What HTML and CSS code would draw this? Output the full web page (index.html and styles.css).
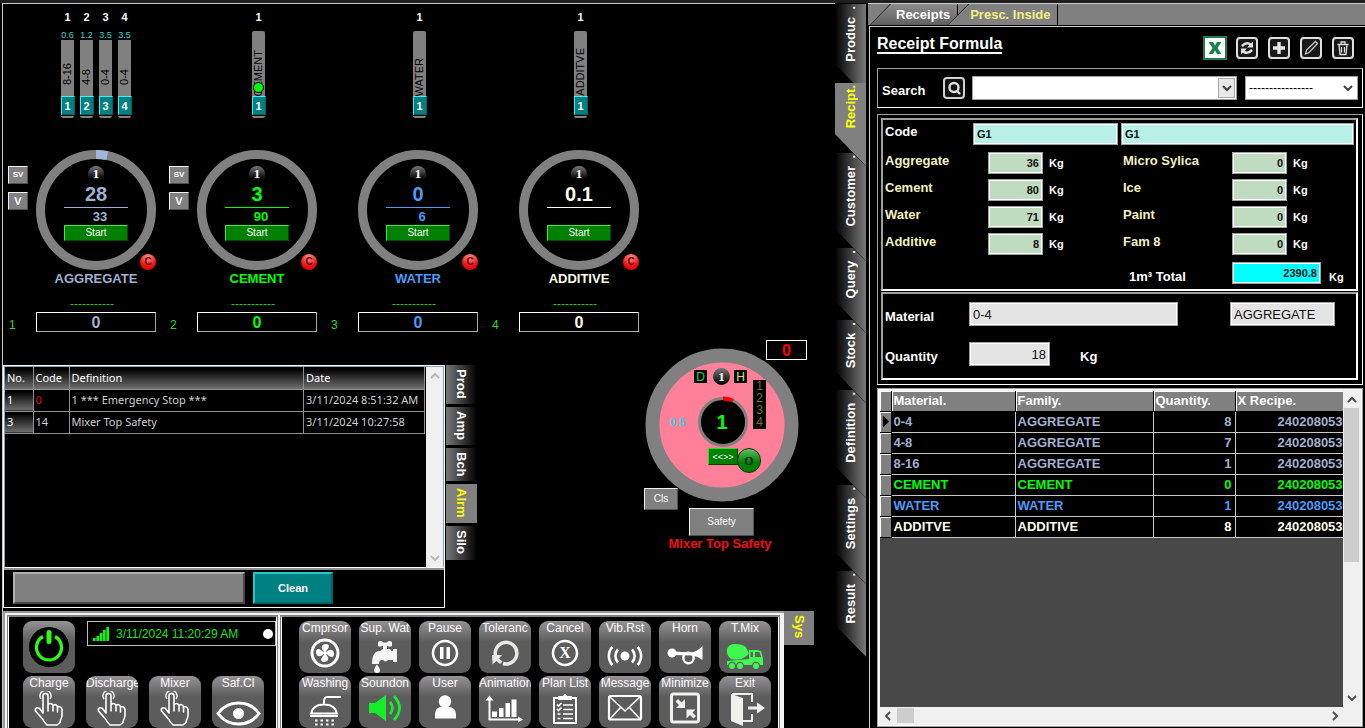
FILE: index.html
```html
<!DOCTYPE html>
<html lang="en">
<head>
<meta charset="utf-8">
<title>Batching Plant Control</title>
<link rel="stylesheet" href="styles.css">
</head>
<body>
<svg class="defs" aria-hidden="true">
  <symbol id="hand" viewBox="0 15 52 37"><path d="M18 23a5.500 5.500 0 1 1 9 0" fill="none" stroke="#fff" stroke-width="1.500"/><path d="M20 37V20a2.500 2.500 0 0 1 5 0v9c1-2 4-2 5 .5 1.500-1.500 4-1 4.500 1.500 2-1 4 0 4.500 2.500v6c0 3-2 4-2 7l-3 2.500H24c-2-2-3-3-4.500-6l-7-8c-1-3 2-4 4-2.500z M25 29v6 M30 30v5 M34.500 31v5" fill="none" stroke="#fff" stroke-width="1.600" stroke-linejoin="round" stroke-linecap="round"/></symbol>
  <symbol id="chev-down" viewBox="0 0 10 10"><path d="M1 3l4 4 4-4" fill="none" stroke="currentColor" stroke-width="2"/></symbol>
  <symbol id="ring" viewBox="0 0 120 120"><circle cx="60" cy="60" r="55.500" fill="none" stroke="#808080" stroke-width="9"/></symbol>
</svg>
<div class="app">
  <main class="plant">
    <section class="stations">
      <article class="station blue-grey">
        <div class="silos">
          <div class="silo"><span class="silo-no">1</span><div class="silo-body"><span class="moist">0.6</span><div class="bar flat"><span>8-16</span></div><button class="gate">1</button><i class="foot"></i></div></div>
          <div class="silo"><span class="silo-no">2</span><div class="silo-body"><span class="moist">1.2</span><div class="bar flat"><span>4-8</span></div><button class="gate">2</button><i class="foot"></i></div></div>
          <div class="silo"><span class="silo-no">3</span><div class="silo-body"><span class="moist">3.5</span><div class="bar flat"><span>0-4</span></div><button class="gate">3</button><i class="foot"></i></div></div>
          <div class="silo"><span class="silo-no">4</span><div class="silo-body"><span class="moist">3.5</span><div class="bar flat"><span>0-4</span></div><button class="gate">4</button><i class="foot"></i></div></div>
        </div>
        <div class="side"><button class="grey-btn sv">SV</button><button class="grey-btn v">V</button></div>
        <div class="gauge">
          <svg class="dial" aria-hidden="true"><use href="#ring"/><path d="M60 0a60 60 0 0 1 12 1.200l-1.500 8.800a51 51 0 0 0-10.500-1z" fill="#a0b8d8"/></svg>
          <div class="readout"><span class="badge">1</span><b class="now">28</b><b class="goal">33</b><button class="start">Start</button></div>
          <button class="reset">C</button>
        </div>
        <h2 class="name">AGGREGATE</h2>
        <span class="dashes">-----------</span>
        <span class="index">1</span>
        <output class="total">0</output>
      </article>
      <article class="station green">
        <div class="silos single">
          <div class="silo"><span class="silo-no">1</span><div class="silo-body"><div class="bar long"><span>CEMENT</span><i class="lamp"></i></div><button class="gate">1</button><i class="foot"></i></div></div>
        </div>
        <div class="side"><button class="grey-btn sv">SV</button><button class="grey-btn v">V</button></div>
        <div class="gauge">
          <svg class="dial" aria-hidden="true"><use href="#ring"/></svg>
          <div class="readout"><span class="badge">1</span><b class="now">3</b><b class="goal">90</b><button class="start">Start</button></div>
          <button class="reset">C</button>
        </div>
        <h2 class="name">CEMENT</h2>
        <span class="dashes">-----------</span>
        <span class="index">2</span>
        <output class="total">0</output>
      </article>
      <article class="station blue">
        <div class="silos single">
          <div class="silo"><span class="silo-no">1</span><div class="silo-body"><div class="bar long"><span>WATER</span></div><button class="gate">1</button><i class="foot"></i></div></div>
        </div>
        <div class="gauge">
          <svg class="dial" aria-hidden="true"><use href="#ring"/></svg>
          <div class="readout"><span class="badge">1</span><b class="now">0</b><b class="goal">6</b><button class="start">Start</button></div>
          <button class="reset">C</button>
        </div>
        <h2 class="name">WATER</h2>
        <span class="dashes">-----------</span>
        <span class="index">3</span>
        <output class="total">0</output>
      </article>
      <article class="station cream">
        <div class="silos single">
          <div class="silo"><span class="silo-no">1</span><div class="silo-body"><div class="bar long"><span>ADDITVE</span></div><button class="gate">1</button><i class="foot"></i></div></div>
        </div>
        <div class="gauge">
          <svg class="dial" aria-hidden="true"><use href="#ring"/></svg>
          <div class="readout"><span class="badge">1</span><b class="now">0.1</b><b class="goal"></b><button class="start">Start</button></div>
          <button class="reset">C</button>
        </div>
        <h2 class="name">ADDITIVE</h2>
        <span class="dashes">-----------</span>
        <span class="index">4</span>
        <output class="total">0</output>
      </article>
    </section>

    <section class="middle">
      <div class="alarms">
        <div class="alarm-list">
          <div class="alarm-view">
            <table class="alarm-table">
              <thead><tr><th class="c-no">No.</th><th class="c-code">Code</th><th>Definition</th><th class="c-date">Date</th></tr></thead>
              <tbody>
                <tr><th>1</th><td class="red">0</td><td>1 *** Emergency Stop ***</td><td>3/11/2024 8:51:32 AM</td></tr>
                <tr><th>3</th><td>14</td><td>Mixer Top Safety</td><td>3/11/2024 10:27:58</td></tr>
              </tbody>
            </table>
          </div>
          <div class="alarm-scroll"><svg class="chev up"><use href="#chev-down"/></svg><svg class="chev"><use href="#chev-down"/></svg></div>
        </div>
        <div class="alarm-foot"><input class="alarm-note" type="text" aria-label="Alarm note"><button class="clean">Clean</button></div>
      </div>
      <nav class="mini-tabs">
        <button class="mini t-prod">Prod</button><button class="mini t-amp">Amp</button><button class="mini t-bch">Bch</button><button class="mini t-alrm on">Alrm</button><button class="mini t-silo">Silo</button>
      </nav>
      <div class="mixer">
        <svg class="mixer-dial" viewBox="0 0 154 154" aria-hidden="true">
          <circle cx="77" cy="77" r="69.500" fill="#ff8098" stroke="#808080" stroke-width="14"/>
          <circle cx="78" cy="74" r="23.500" fill="#000" stroke="#808080" stroke-width="3"/>
          <path d="M78 50.500a23.500 23.500 0 0 1 10 2.200" fill="none" stroke="#f00" stroke-width="4"/>
        </svg>
        <output class="m-count">0</output>
        <span class="m-chip m-d">D</span><span class="badge m-badge">1</span><span class="m-chip m-h">H</span>
        <span class="m-levels"><i>1</i><i>2</i><i>3</i><i>4</i></span>
        <span class="m-amp">0.5</span>
        <b class="m-value">1</b>
        <button class="m-gate">&lt;&lt;&gt;&gt;</button>
        <button class="m-open">O</button>
        <button class="grey-btn m-cls">Cls</button>
        <button class="grey-btn m-safety">Safety</button>
        <strong class="m-alert">Mixer Top Safety</strong>
      </div>
    </section>

    <section class="dock">
      <div class="dock-frame">
        <div class="dock-group first">
          <div class="power-row">
            <button class="tile" aria-label="Power"><svg class="power" viewBox="0 0 52 52"><circle cx="26" cy="26" r="20" fill="#000"/><path d="M20 15.500a12.500 12.500 0 1 0 12 0" fill="none" stroke="#2cfc10" stroke-width="3.200"/><path d="M26 11.500v9" stroke="#2cfc10" stroke-width="5" stroke-linecap="round"/></svg></button>
            <div class="clock"><svg class="signal" viewBox="0 0 16 14"><path d="M0 11h2.600v3H0z M3.400 9H6v5H3.400z M6.800 6h2.600v8H6.800z M10 3h2.600v11H10z M13.300 0H16v14h-2.700z" fill="#0f0"/></svg><time>3/11/2024 11:20:29 AM</time><i class="dot"></i></div>
          </div>
          <div class="tiles four">
            <button class="tile"><span>Charge</span><svg><use href="#hand"/></svg></button>
            <button class="tile"><span>Discharge</span><svg><use href="#hand"/></svg></button>
            <button class="tile"><span>Mixer</span><svg><use href="#hand"/></svg></button>
            <button class="tile"><span>Saf.Cl</span><svg viewBox="0 15 52 37"><path d="M6 37.500c10-14 31-14 41 0-10 14-31 14-41 0z" fill="none" stroke="#fff" stroke-width="3"/><circle cx="26.500" cy="37.500" r="5.500" fill="#fff"/></svg></button>
          </div>
        </div>
        <div class="dock-group second">
          <div class="tiles eight">
            <button class="tile"><span>Cmprsor</span><svg viewBox="0 15 52 37"><circle cx="26" cy="32" r="13" fill="none" stroke="#fff" stroke-width="3"/><g fill="#fff"><path id="blade" d="M26 31c-5-3-4-8 1-8 4 0 4 4-1 8z"/><use href="#blade" transform="rotate(90 26 32)"/><use href="#blade" transform="rotate(180 26 32)"/><use href="#blade" transform="rotate(270 26 32)"/><circle cx="26" cy="32" r="2"/></g></svg></button>
            <button class="tile"><span>Sup. Wat</span><svg viewBox="0 15 52 37"><path d="M19 21q3-2 5 .5h4q2-2.500 5-.5v4q-3 1.500-5-.5v3.500h3l1.500 2H34v-2h4v13h-4v-2h-5q-2 3-5 0h-1q-3 0-3 4h-7q0-13 8-13l3-2v-3.500q-3 2-5 .5z" fill="#f4f4f4"/><path d="M18 43.500q-3 4-3 5.500a3 3 0 0 0 6 0q0-1.500-3-5.500z" fill="#f4f4f4"/></svg></button>
            <button class="tile"><span>Pause</span><svg viewBox="0 15 52 37"><circle cx="26" cy="32" r="12" fill="none" stroke="#fff" stroke-width="2.500"/><path d="M21 26h3.500v12H21z M27.500 26H31v12h-3.500z" fill="#fff"/></svg></button>
            <button class="tile"><span>Toleranc</span><svg viewBox="0 15 52 37"><path d="M17 36a10.800 10.800 0 1 1 7 6.500" fill="none" stroke="#e8e8e4" stroke-width="3.500"/><path d="M13 34h10l-3 3.500 3.500 3-2.500 2.500-3.500-3-4 3.500z" fill="#e8e8e4"/></svg></button>
            <button class="tile"><span>Cancel</span><svg viewBox="0 15 52 37"><circle cx="26" cy="32" r="12" fill="none" stroke="#fff" stroke-width="2.500"/><text x="26" y="37" class="x-mark">X</text></svg></button>
            <button class="tile"><span>Vib.Rst</span><svg viewBox="0 15 52 37"><circle cx="26" cy="35" r="4.500" fill="#fff"/><path d="M19 28.500a9.500 9.500 0 0 0 0 13M33 28.500a9.500 9.500 0 0 1 0 13M13.500 26a13 13 0 0 0 0 18M38.500 26a13 13 0 0 1 0 18" fill="none" stroke="#fff" stroke-width="2.600"/></svg></button>
            <button class="tile"><span>Horn</span><svg viewBox="0 15 52 37"><circle cx="13" cy="32" r="4.500" fill="#fff"/><path d="M14 30.500l18 1q5 0 11.500-6.500v14q-5-4-10-4.500L14 34z" fill="#fff"/><circle cx="29.500" cy="37" r="5.200" fill="none" stroke="#fff" stroke-width="2.500"/></svg></button>
            <button class="tile"><span>T.Mix</span><svg viewBox="0 15 52 37"><g fill="#40f850"><path d="M8 28q2-5 8-5 7 0 11 3l3 7-4 3q-5 4-14 2-5-4-4-10z"/><path d="M8 40l22-2v-9h8l4 1 2 7v7H8z"/></g><path d="M36 31h4.500l1.500 5h-6z M31.500 31h2.500v5h-2.500z" fill="#606060"/><g fill="#40f850" stroke="#606060" stroke-width="1.300"><circle cx="13" cy="45" r="3.600"/><circle cx="21" cy="45" r="3.600"/><circle cx="37" cy="45" r="3.600"/></g></svg></button>
            <button class="tile"><span>Washing</span><svg viewBox="0 15 52 37"><path d="M42 21H28q-3 0-3 5v3M12 37.500q2-9 13-9t13 9z" fill="none" stroke="#fff" stroke-width="2"/><path d="M11 40h28" stroke="#fff" stroke-width="2"/><path d="M16 44.500h20M16 48.500h20" stroke="#fff" stroke-width="2" stroke-dasharray="2.500 3"/></svg></button>
            <button class="tile"><span>Soundon</span><svg viewBox="0 15 52 37"><path d="M10 27h6l11-8v26l-11-8h-6z" fill="#14f028"/><path d="M31 26q5 6 0 12M35 20q11 12 0 24" fill="none" stroke="#14f028" stroke-width="2.800"/></svg></button>
            <button class="tile"><span>User</span><svg viewBox="0 15 52 37"><circle cx="26" cy="25.500" r="6.200" fill="#fff"/><path d="M16 42.500v-4q0-7 7-8h6q8 1 8 8v4z" fill="#fff"/></svg></button>
            <button class="tile"><span>Animation</span><svg viewBox="0 15 52 37"><path d="M10.500 22v21.500H40" fill="none" stroke="#fff" stroke-width="2"/><path d="M10.500 19.500l4 5h-8z M44 43.500l-5-3v6z M13 35.500h5V41h-5z M20 32h4.500v9H20z M26.500 27H31v14h-4.500z M32.500 23.500h5V41h-5z" fill="#fff"/></svg></button>
            <button class="tile"><span>Plan List</span><svg viewBox="0 15 52 37"><path d="M20 22h-5v25h22V22h-5" fill="none" stroke="#fff" stroke-width="2"/><path d="M19 20h5q2-4 4 0h5v4H19z" fill="#fff"/><path d="M24 29h10M24 33.500h10M24 38h10M24 42.500h10M18 28.500l1.500 1.500 3-3M18 33l1.500 1.500 3-3M18.500 38h3M18.500 42.500h3" fill="none" stroke="#fff" stroke-width="1.600"/></svg></button>
            <button class="tile"><span>Message</span><svg viewBox="0 15 52 37"><rect x="10" y="20" width="32" height="23.500" rx="1.500" fill="none" stroke="#fff" stroke-width="2.200"/><path d="M11 21l15 14 15-14M11 43l11-12M41 43L30 31" fill="none" stroke="#fff" stroke-width="1.600"/></svg></button>
            <button class="tile"><span>Minimize</span><svg viewBox="0 15 52 37"><rect x="12.500" y="18" width="27" height="28" rx="2" fill="none" stroke="#f0f0ec" stroke-width="3"/><path d="M26 23v9h-9l3-3-3.500-3.500 2.500-2.500 3.500 3.500z M27.500 33.500h9l-3 3 3.500 3.500-2.500 2.500-3.500-3.500-3.500 3.500z" fill="#f0f0ec"/></svg></button>
            <button class="tile"><span>Exit</span><svg viewBox="0 15 52 37"><path d="M12 18l12 4v28l-12-5z" fill="#f0f0ec"/><path d="M13 18h20v8M33 38v7h-9" fill="none" stroke="#f0f0ec" stroke-width="2"/><path d="M29 30.500h9v-4l8 5.500-8 5.500v-4h-9z" fill="#f0f0ec"/></svg></button>
          </div>
        </div>
      </div>
      <button class="sys">Sys</button>
    </section>
  </main>

  <nav class="rail">
    <button class="tab r1"><span>Produc&nbsp; .</span></button>
    <button class="tab r2 on"><span>Recipt.</span></button>
    <button class="tab r3"><span>Customer&nbsp; .</span></button>
    <button class="tab r4"><span>Query&nbsp; .</span></button>
    <button class="tab r5"><span>Stock&nbsp; .</span></button>
    <button class="tab r6"><span>Definition&nbsp; .</span></button>
    <button class="tab r7"><span>Settings&nbsp; .</span></button>
    <button class="tab r8"><span>Result&nbsp; .</span></button>
  </nav>

  <aside class="panel">
    <nav class="top-tabs"><button class="top-tab"><span>Receipts</span></button><button class="top-tab on"><span>Presc. Inside</span></button></nav>
    <div class="panel-body">
      <header class="head">
        <h1>Receipt Formula</h1>
        <div class="tools">
          <button class="tool" aria-label="Export"><svg viewBox="0 0 24 24"><rect width="24" height="24" fill="#1c8048"/><rect x="2" y="2" width="20" height="20" fill="#fff"/><path d="M5.500 6h4.500l2 3.500L14 6h4.500l-4 6 4 6H14l-2-3.500-2 3.500H5.500l4-6z" fill="#1c8048"/></svg></button>
          <button class="tool" aria-label="Refresh"><svg viewBox="0 0 24 24"><rect x="2" y="2" width="20" height="20" rx="3" fill="#181818" stroke="#e0e0e0" stroke-width="2"/><path d="M7 10q5-5 9-1M17 14q-5 5-9 1" fill="none" stroke="#e0e0e0" stroke-width="2.500"/><path d="M18 5.500v6h-6z M6 18.500v-6h6z" fill="#e0e0e0"/></svg></button>
          <button class="tool" aria-label="Add"><svg viewBox="0 0 24 24"><rect x="2" y="2" width="20" height="20" rx="3" fill="#181818" stroke="#e0e0e0" stroke-width="2"/><path d="M12 6v12M6 12h12" stroke="#e8e8e8" stroke-width="3.400"/></svg></button>
          <button class="tool" aria-label="Edit"><svg viewBox="0 0 24 24"><rect x="2" y="2" width="20" height="20" rx="3" fill="#181818" stroke="#e0e0e0" stroke-width="2"/><path d="M6.500 18l1-4 9-8.500 2 2-8.500 9z" fill="none" stroke="#c8c8c8" stroke-width="1.300"/></svg></button>
          <button class="tool" aria-label="Delete"><svg viewBox="0 0 24 24"><rect x="2" y="2" width="20" height="20" rx="3" fill="#181818" stroke="#e0e0e0" stroke-width="2"/><path d="M6.500 8.500h11M10 8V6h4v2M8 9l1 9.500h6L16 9M10.500 11v5.500M13.500 11v5.500" fill="none" stroke="#e0e0e0" stroke-width="1.300"/></svg></button>
        </div>
      </header>

      <div class="search">
        <label for="q">Search</label>
        <button class="tool find" aria-label="Find"><svg viewBox="0 0 24 24"><rect x="2" y="2" width="20" height="20" rx="3" fill="#101010" stroke="#d0d0d0" stroke-width="2"/><circle cx="12" cy="11.500" r="4.500" fill="none" stroke="#e0e0e0" stroke-width="2.400"/><path d="M15 15l3 3" stroke="#e0e0e0" stroke-width="2.400"/></svg></button>
        <div class="combo wide"><select id="q"><option></option></select><span class="drop boxed"><svg><use href="#chev-down"/></svg></span></div>
        <div class="combo narrow"><select aria-label="Filter"><option>----------------</option></select><span class="drop"><svg><use href="#chev-down"/></svg></span></div>
      </div>

      <form class="form">
        <div class="group recipe">
          <div class="code-row"><label for="code">Code</label><input id="code" class="field aqua" value="G1"><input class="field aqua" aria-label="Name" value="G1"></div>
          <div class="weights">
            <label for="w1">Aggregate</label><input id="w1" class="field mint" value="36"><span class="kg">Kg</span>
            <label for="w5">Micro Sylica</label><input id="w5" class="field mint" value="0"><span class="kg">Kg</span>
            <label for="w2">Cement</label><input id="w2" class="field mint" value="80"><span class="kg">Kg</span>
            <label for="w6">Ice</label><input id="w6" class="field mint" value="0"><span class="kg">Kg</span>
            <label for="w3">Water</label><input id="w3" class="field mint" value="71"><span class="kg">Kg</span>
            <label for="w7">Paint</label><input id="w7" class="field mint" value="0"><span class="kg">Kg</span>
            <label for="w4">Additive</label><input id="w4" class="field mint" value="8"><span class="kg">Kg</span>
            <label for="w8">Fam 8</label><input id="w8" class="field mint" value="0"><span class="kg">Kg</span>
          </div>
          <div class="total-row"><label for="sum">1m³ Total</label><input id="sum" class="field cyan" value="2390.8"><span class="kg">Kg</span></div>
        </div>
        <div class="group material">
          <div class="mat-row"><label for="mat">Material</label><input id="mat" class="field grey w-mat" value="0-4"><input class="field grey w-fam" aria-label="Family" value="AGGREGATE"></div>
          <div class="mat-row"><label for="qty">Quantity</label><input id="qty" class="field grey w-qty" value="18"><span class="unit">Kg</span></div>
        </div>
      </form>

      <div class="grid-box">
        <div class="grid-view">
          <table class="grid">
            <thead><tr><th class="g-ind"></th><th class="g-mat">Material.</th><th class="g-fam">Family.</th><th class="g-qty">Quantity.</th><th>X Recipe.</th></tr></thead>
            <tbody>
              <tr class="blue-grey"><th><i class="cursor"></i></th><td>0-4</td><td>AGGREGATE</td><td class="num">8</td><td class="rec">2402080536</td></tr>
              <tr class="blue-grey"><th></th><td>4-8</td><td>AGGREGATE</td><td class="num">7</td><td class="rec">2402080536</td></tr>
              <tr class="blue-grey"><th></th><td>8-16</td><td>AGGREGATE</td><td class="num">1</td><td class="rec">2402080536</td></tr>
              <tr class="green"><th></th><td>CEMENT</td><td>CEMENT</td><td class="num">0</td><td class="rec">2402080536</td></tr>
              <tr class="blue"><th></th><td>WATER</td><td>WATER</td><td class="num">1</td><td class="rec">2402080536</td></tr>
              <tr class="cream"><th></th><td>ADDITVE</td><td>ADDITIVE</td><td class="num">8</td><td class="rec">2402080536</td></tr>
            </tbody>
          </table>
        </div>
        <div class="v-scroll"><svg class="chev up"><use href="#chev-down"/></svg><i class="v-thumb"></i><svg class="chev"><use href="#chev-down"/></svg></div>
        <div class="h-scroll"><svg class="chev left"><use href="#chev-down"/></svg><i class="h-thumb"></i><svg class="chev right"><use href="#chev-down"/></svg></div>
      </div>
    </div>
  </aside>
</div>
</body>
</html>
```
FILE: styles.css
```css
* { box-sizing: border-box; }
body { margin: 0; background: #000; color: #fff; font: 13px/14px "Liberation Sans", Arial, sans-serif; overflow: hidden; }
button, input, select { font: inherit; color: inherit; margin: 0; padding: 0; border: 0; border-radius: 0; background: none; }
button { cursor: pointer; }
h1, h2 { margin: 0; font-size: 13px; }
i { font-style: normal; }
svg { display: block; }
.defs { position: absolute; width: 0; height: 0; }

.app { display: grid; grid-template-columns: minmax(835px, 835fr) 33px minmax(0, 497fr); grid-template-rows: minmax(0, 1fr); height: 100vh; border-top: 3px solid #202020; }
.blue-grey { color: #a0b0d0; }
.green { color: #0f0; }
.blue { color: #4c9cf8; }
.cream { color: #ffffe8; }

/* plant overview */
.plant { display: flex; flex-direction: column; border-left: 1px solid #c8c8c8; border-top: 1px solid #c8c8c8; margin-left: 2px; }
.stations { display: flex; gap: 13px; padding: 6px 0 0 5px; }
.station { display: grid; grid-template-columns: 20px 120px; column-gap: 8px; }
.silos { grid-column: 2; display: flex; gap: 6px; justify-content: center; margin-bottom: 32px; }
.single { padding-left: 3px; }
.silo { width: 13px; display: flex; flex-direction: column; align-items: center; color: #fff; }
.silo-no { font: bold 11px/14px "Liberation Sans", Arial, sans-serif; margin-bottom: 7px; }
.silo-body { display: flex; flex-direction: column; align-items: center; height: 87px; }
.moist { font-size: 9px; line-height: 9px; color: #30d8d8; }
.bar { width: 13px; flex: 1; background: #808080; position: relative; display: flex; align-items: center; justify-content: flex-end; flex-direction: column; color: #000; overflow: hidden; }
.bar span { writing-mode: vertical-rl; transform: rotate(180deg); font-size: 11px; line-height: 13px; }
.flat { padding-bottom: 11px; }
.long { border-radius: 2px 2px 0 0; }
.lamp { position: absolute; bottom: 3px; left: 1px; width: 11px; height: 11px; border-radius: 6px; background: #0f0; border: 1px solid #000; }
.gate { width: 14px; height: 19px; background: #008080; border: 1px solid #40f0f0; border-right-color: #006060; border-bottom-color: #006060; font: bold 11px/14px "Liberation Sans", Arial, sans-serif; color: #fff; }
.foot { width: 13px; height: 2px; background: #808080; margin-top: 1px; border-radius: 0 0 2px 2px; }

.side { grid-column: 1; grid-row: 2; display: flex; flex-direction: column; gap: 8px; padding-top: 16px; }
.grey-btn { background: #808080; border: 1px solid #f0f0f0; border-right-color: #505050; border-bottom-color: #505050; color: #fff; font-size: 10px; line-height: 14px; }
.side .grey-btn { width: 20px; height: 18px; }
.side .sv { font-size: 8px; font-weight: bold; }
.side .v { font-size: 11px; font-weight: bold; }
.gauge { grid-column: 2; grid-row: 2; display: grid; height: 120px; position: relative; }
.dial { grid-area: 1 / 1; width: 120px; height: 120px; }
.readout { grid-area: 1 / 1; display: flex; flex-direction: column; align-items: center; padding-top: 16px; }
.badge { width: 16px; height: 13px; border-radius: 8px 8px 0 0; background: linear-gradient(#777, #222 70%, #000); color: #fff; font: bold 13px/15px "Liberation Serif", serif; text-align: center; }
.now { font-size: 20px; line-height: 26px; margin-top: 2px; width: 64px; height: 27px; text-align: center; border-bottom: 1px solid; }
.goal { font-size: 13px; line-height: 18px; height: 17px; padding-left: 8px; }
.start { width: 64px; height: 16px; background: #008000; border: 1px solid #40e840; border-right-color: #004800; border-bottom-color: #004800; color: #fff; font-size: 10px; line-height: 14px; }
.reset { position: absolute; right: 0; bottom: 0; width: 16px; height: 16px; border-radius: 8px; background: radial-gradient(circle at 50% 20%, #ff9090, #f01010 60%, #d00000); color: #500; font: bold 10px/16px "Liberation Sans", Arial, sans-serif; }
.name { grid-column: 2; text-align: center; margin-top: 2px; line-height: 14px; }
.dashes { grid-column: 2; margin-top: 11px; font-size: 12px; line-height: 14px; color: #30c830; padding-right: 8px; text-align: center; }
.index { grid-column: 1; align-self: end; font-size: 12px; line-height: 14px; color: #30d830; padding-left: 1px; }
.total { grid-column: 2; margin-top: 1px; height: 20px; border: 1px solid #fff; border-right-color: #aaa; border-bottom-color: #aaa; font-weight: bold; font-size: 16px; line-height: 19px; text-align: center; }

/* alarms */
.middle { display: flex; align-items: flex-end; margin-top: 8px; }
.alarms { width: 442px; height: 243px; border: 1px solid #fff; display: flex; flex-direction: column; }
.alarm-list { display: flex; flex: 1; border: 1px solid #88a0b8; border-bottom-color: #fff; }
.alarm-view { flex: 1; }
.alarm-table { width: 420px; border-collapse: collapse; table-layout: fixed; font: 11px/16px "Noto Sans", "Open Sans", sans-serif; color: #d0d0d0; }
.alarm-table th, .alarm-table td { border: 1px solid #909090; height: 22px; padding: 0 2px; text-align: left; font-weight: normal; white-space: nowrap; }
.alarm-table tr > :first-child { border-left: 0; }
.alarm-table thead th { border-top: 0; background: linear-gradient(#000 10%, #707070); color: #fff; }
.alarm-table tbody th { background: linear-gradient(#000 10%, #707070); color: #fff; }
.alarm-table .c-no { width: 28px; }
.c-code { width: 36px; }
.c-date { width: 121px; }
.alarm-table .red { color: #e01010; }
.alarm-scroll { width: 17px; background: #f0f0f0; display: flex; flex-direction: column; justify-content: space-between; align-items: center; padding: 4px 0; color: #b8b8b8; }
.chev { width: 10px; height: 10px; }
.up { transform: rotate(180deg); }
.left { transform: rotate(90deg); }
.right { transform: rotate(-90deg); }
.alarm-foot { border-top: 2px solid #909090; height: 39px; padding: 2px 9px; display: flex; gap: 8px; }
.alarm-note { width: 232px; height: 32px; background: #808080; border: 2px solid #b0b0b0; border-right-color: #484848; border-bottom-color: #484848; }
.clean { width: 80px; height: 32px; background: #008080; border: 2px solid #20c8c8; border-right-color: #006464; border-bottom-color: #006464; color: #fff; font-weight: bold; font-size: 11px; }
.mini-tabs { align-self: flex-start; margin: 25px 0 0 1px; display: flex; flex-direction: column; gap: 3px; }
.mini { writing-mode: vertical-rl; width: 31px; background: linear-gradient(to right, #787878, #000); font-weight: bold; font-size: 13px; line-height: 27px; color: #fff; text-align: left; padding-top: 4px; }
.mini.on { background: #808080; color: #ff0; }
.t-prod, .t-alrm { height: 39px; }
.t-amp { height: 38px; }
.t-bch { height: 33px; }
.t-silo { height: 34px; }

/* mixer mimic: items sit on a free canvas */
.mixer { position: relative; width: 170px; height: 268px; margin-left: 164px; }
.mixer > * { position: absolute; }
.mixer-dial { left: 4px; top: 8px; width: 154px; height: 154px; }
.m-count { left: 125px; top: 0; width: 41px; height: 20px; border: 1px solid #fff; color: #f00; font: bold 16px/19px "Liberation Sans", Arial, sans-serif; text-align: center; }
.m-chip { top: 30px; width: 13px; height: 13px; background: #000; font-size: 12px; line-height: 14px; text-align: center; }
.m-d { left: 53px; color: #30d830; }
.m-h { left: 93px; color: #e8e840; }
.m-badge { left: 72px; top: 28px; width: 17px; height: 17px; line-height: 17px; border-radius: 9px; }
.m-levels { left: 112px; top: 40px; width: 13px; height: 49px; background: #000; color: #807020; display: flex; flex-direction: column; font-size: 12px; line-height: 12px; text-align: center; }
.m-amp { left: 29px; top: 75px; font-weight: bold; font-size: 11px; color: #30d0e8; }
.m-value { left: 61px; top: 70px; width: 40px; text-align: center; font-size: 20px; line-height: 24px; color: #0f0; }
.m-gate { left: 67px; top: 108px; width: 30px; height: 17px; background: #008000; border: 1px solid #20e820; border-right-color: #004000; border-bottom-color: #004000; font-size: 9px; line-height: 12px; }
.m-open { left: 96px; top: 108px; width: 24px; height: 25px; border-radius: 12px; border: 1px solid #103010; background: linear-gradient(#60c060, #008000 60%); color: #022; font: bold 12px/20px "Liberation Serif", serif; }
.m-cls { left: 3px; top: 148px; width: 34px; height: 22px; }
.m-safety { left: 48px; top: 168px; width: 65px; height: 28px; }
.m-alert { left: 0; top: 197px; width: 158px; text-align: center; color: #f01010; white-space: nowrap; }

/* dock */
.dock { display: flex; align-items: flex-start; margin-top: 3px; flex: 1; min-height: 0; }
.dock-frame { display: flex; width: 781px; height: 130px; border: 2px solid #989898; border-right: 0; padding: 2px 4px 0 2px; gap: 2px; background: #f4f4f4; flex: none; }
.dock-group { background: #000; border: 2px solid #fff; border-top-color: #808080; outline: 1px solid #808080; outline-offset: -1px; }
.first { width: 271px; padding: 4px 0 0 14px; flex: none; }
.second { flex: 1; padding: 4px 0 0 17px; }
.power-row { display: flex; justify-content: space-between; height: 55px; }
.clock { width: 189px; height: 25px; border: 1px solid #c0c0c0; display: flex; align-items: center; gap: 7px; padding: 0 2px 0 5px; color: #20e020; font-size: 12px; white-space: nowrap; }
.signal { width: 16px; height: 14px; flex: none; }
.dot { width: 10px; height: 10px; border-radius: 5px; background: #fff; margin-left: auto; }
.tiles { display: grid; }
.four { grid-template-columns: repeat(4, 52px); column-gap: 11px; }
.eight { grid-template-columns: repeat(8, 52px); gap: 3px 8px; }
.tile { width: 52px; height: 52px; border-radius: 9px; background: linear-gradient(#969296, #5c5c5c 40%, #5c5c5c); overflow: hidden; color: #fff; font-size: 12px; line-height: 15px; white-space: nowrap; display: flex; flex-direction: column; }
.tile span { width: 52px; text-align: center; }
.tile svg { width: 52px; height: 37px; }
.tile .power { height: 52px; }
.x-mark { font: bold 16px "Liberation Serif", serif; fill: #fff; text-anchor: middle; }
.sys { writing-mode: vertical-rl; width: 30px; height: 34px; background: #808080; color: #ff0; font-weight: bold; text-align: left; padding-top: 4px; line-height: 26px; }

/* section rail */
.rail { display: flex; flex-direction: column; padding-top: 1px; }
.tab { position: relative; width: 32px; flex: none; background: #000; clip-path: polygon(0 0, 100% 0, 100% 100%, 0 calc(100% - 32px)); padding: 2px 0 0; display: flex; justify-content: center; align-items: flex-start; font-weight: bold; color: #fff; }
.tab::before { content: ""; position: absolute; inset: 0 1px 1px 0; background: linear-gradient(to right, #000, #787878); clip-path: polygon(0 0, 100% 0, 100% 100%, 0 calc(100% - 32px)); }
.tab + .tab { margin-top: -14px; }
.tab span { position: relative; writing-mode: vertical-rl; transform: rotate(180deg); line-height: 16px; }
.tab.on { color: #ff0; }
.tab.on::before { background: #808080; }
.r1 { height: 93px; z-index: 7; }
.r2 { height: 84px; z-index: 8; }
.r3 { height: 109px; z-index: 6; }
.r4 { height: 86px; z-index: 5; }
.r5 { height: 84px; z-index: 4; }
.r6 { height: 109px; z-index: 3; }
.r7 { height: 100px; z-index: 2; }
.r8 { height: 87px; z-index: 1; }

/* recipe panel */
.panel { display: flex; flex-direction: column; border-top: 1px solid #c8c8c8; min-width: 0; min-height: 0; }
.top-tabs { display: flex; height: 22px; background: #808080; border-bottom: 1px solid #000; padding-left: 1px; flex: none; }
.top-tab { position: relative; height: 22px; background: #000; font-weight: bold; color: #fff; clip-path: polygon(21px 0, 100% 0, 100% 100%, 0 100%); padding: 0 8px 0 27px; }
.top-tab::before { content: ""; position: absolute; inset: 0 1px 1px 1px; background: linear-gradient(#8c8c8c, #606060); clip-path: polygon(21px 0, 100% 0, 100% 100%, 0 100%); }
.top-tab.on { margin-left: -11px; color: #f0f080; padding: 0 8px 0 23px; }
.top-tab.on::before { background: #808080; }
.top-tab span { position: relative; }
.panel-body { flex: 1; display: flex; flex-direction: column; border-left: 1px solid #d0d0d0; border-top: 1px solid #d0d0d0; margin-left: 1px; padding: 0 2px 1px 7px; min-height: 0; }
.head { display: flex; justify-content: space-between; align-items: center; height: 41px; flex: none; padding-right: 8px; }
.head h1 { font-size: 16px; line-height: 17px; border-bottom: 2px solid #fff; margin-bottom: 6px; }
.tools { display: flex; gap: 8px; }
.tool { width: 24px; height: 24px; }
.tool svg { width: 24px; height: 24px; }
.search { display: flex; align-items: center; height: 40px; border: 1px solid #a0a0a0; border-bottom-color: #fff; border-right-color: #fff; padding: 0 4px; font-weight: bold; flex: none; }
.search label { width: 60px; padding-top: 5px; }
.combo { display: grid; height: 24px; background: #fff; border: 1px solid #a0a0a0; color: #000; }
.combo select { grid-area: 1 / 1; appearance: none; width: 100%; padding-left: 3px; font-size: 12px; font-weight: normal; outline: 0; }
.wide { flex: 1; margin: 0 8px 0 6px; }
.narrow { width: 113px; }
.drop { grid-area: 1 / 1; justify-self: end; width: 17px; margin: 1px; display: flex; align-items: center; justify-content: center; color: #404040; pointer-events: none; }
.drop svg { width: 10px; height: 10px; }
.boxed { background: #e8e8e8; border: 1px solid #a8a8a8; }

.form { margin-top: 6px; height: 271px; border: 1px solid #a0a0a0; border-right-color: #fff; border-bottom-color: #fff; padding: 3px 4px 4px 3px; font-weight: bold; flex: none; display: flex; flex-direction: column; gap: 1px; }
.group { border: 2px solid #a0a0a0; border-right-color: #fff; border-bottom-color: #fff; padding: 3px 2px; }
.recipe { height: 173px; flex: none; }
.material { flex: 1; min-height: 0; padding-top: 8px; }
.field { width: 100%; min-width: 0; height: 22px; border: 1px solid #a0a0a0; box-shadow: inset 0 0 0 1px #fff; color: #101010; padding: 0 3px; font-weight: bold; font-size: 11px; outline: 0; }
.aqua { background: #b8f0e8; }
.mint { background: #c0dcc0; text-align: right; }
.cyan { background: #0ff; text-align: right; }
.grey { background: #e4e4e4; height: 24px; font-size: 13px; font-weight: normal; }
.code-row { display: grid; grid-template-columns: 85px 145fr 233fr; column-gap: 3px; margin-bottom: 7px; }
.code-row label { padding-top: 2px; }
.weights { display: grid; grid-template-columns: 103px 55px 80px 109px 55px 1fr; row-gap: 5px; color: #f4f0c0; }
.weights label { padding-top: 2px; }
.kg { font-size: 11px; color: #fff; padding: 4px 0 0 6px; }
.total-row { display: grid; grid-template-columns: 103px 89px 1fr; margin: 7px 0 0 244px; align-items: end; }
.total-row .kg { padding-left: 8px; }
.mat-row { display: flex; align-items: flex-start; height: 40px; }
.mat-row + .mat-row { height: 28px; }
.mat-row label { width: 84px; padding-top: 4px; flex: none; }
.mat-row label, .unit { line-height: 22px; }
.w-mat { width: 209px; }
.w-fam { width: 105px; margin-left: auto; margin-right: 19px; }
.w-qty { width: 81px; text-align: right; }
.unit { padding: 4px 0 0 30px; }

.grid-box { margin-top: 3px; flex: 1; min-height: 0; border: 1px solid #a0a0a0; outline: 1px solid #fff; outline-offset: -2px; padding: 2px; display: grid; grid-template: minmax(0, 1fr) 17px / minmax(0, 1fr) 17px; background: #f0f0f0; }
.grid-view { background: #484848; overflow: hidden; }
.grid { width: 100%; border-collapse: collapse; table-layout: fixed; font-weight: bold; background: #000; }
.grid th, .grid td { height: 21px; padding: 0 3px 0 2px; border: solid #c8c8c8; border-width: 0 1px 1px 0; overflow: hidden; white-space: nowrap; text-align: left; line-height: 14px; }
.grid thead th { background: #808080; color: #fff; border-color: #000; box-shadow: inset 1px 1px #fff; height: 20px; }
.grid tbody th { background: #808080; border-color: #000; box-shadow: inset 1px 1px #fff; padding: 0 0 0 3px; }
.cursor { display: block; width: 6px; height: 12px; background: #000; clip-path: polygon(0 0, 100% 50%, 0 100%); }
.grid .g-ind { width: 11px; padding: 0; }
.g-mat { width: 124px; }
.g-fam { width: 138px; }
.g-qty { width: 82px; }
.grid .num { text-align: right; }
.grid .rec { padding-left: 42px; text-overflow: clip; }
.grid tr > :last-child { border-right: 0; }
.v-scroll { display: flex; flex-direction: column; align-items: center; padding: 4px 0; color: #505050; }
.v-thumb { width: 15px; height: 154px; margin: 3px 0 auto; background: #cdcdcd; }
.h-scroll { display: flex; align-items: center; padding: 0 3px; color: #505050; }
.h-thumb { width: 17px; height: 15px; margin: 0 auto 0 4px; background: #cdcdcd; }
```
